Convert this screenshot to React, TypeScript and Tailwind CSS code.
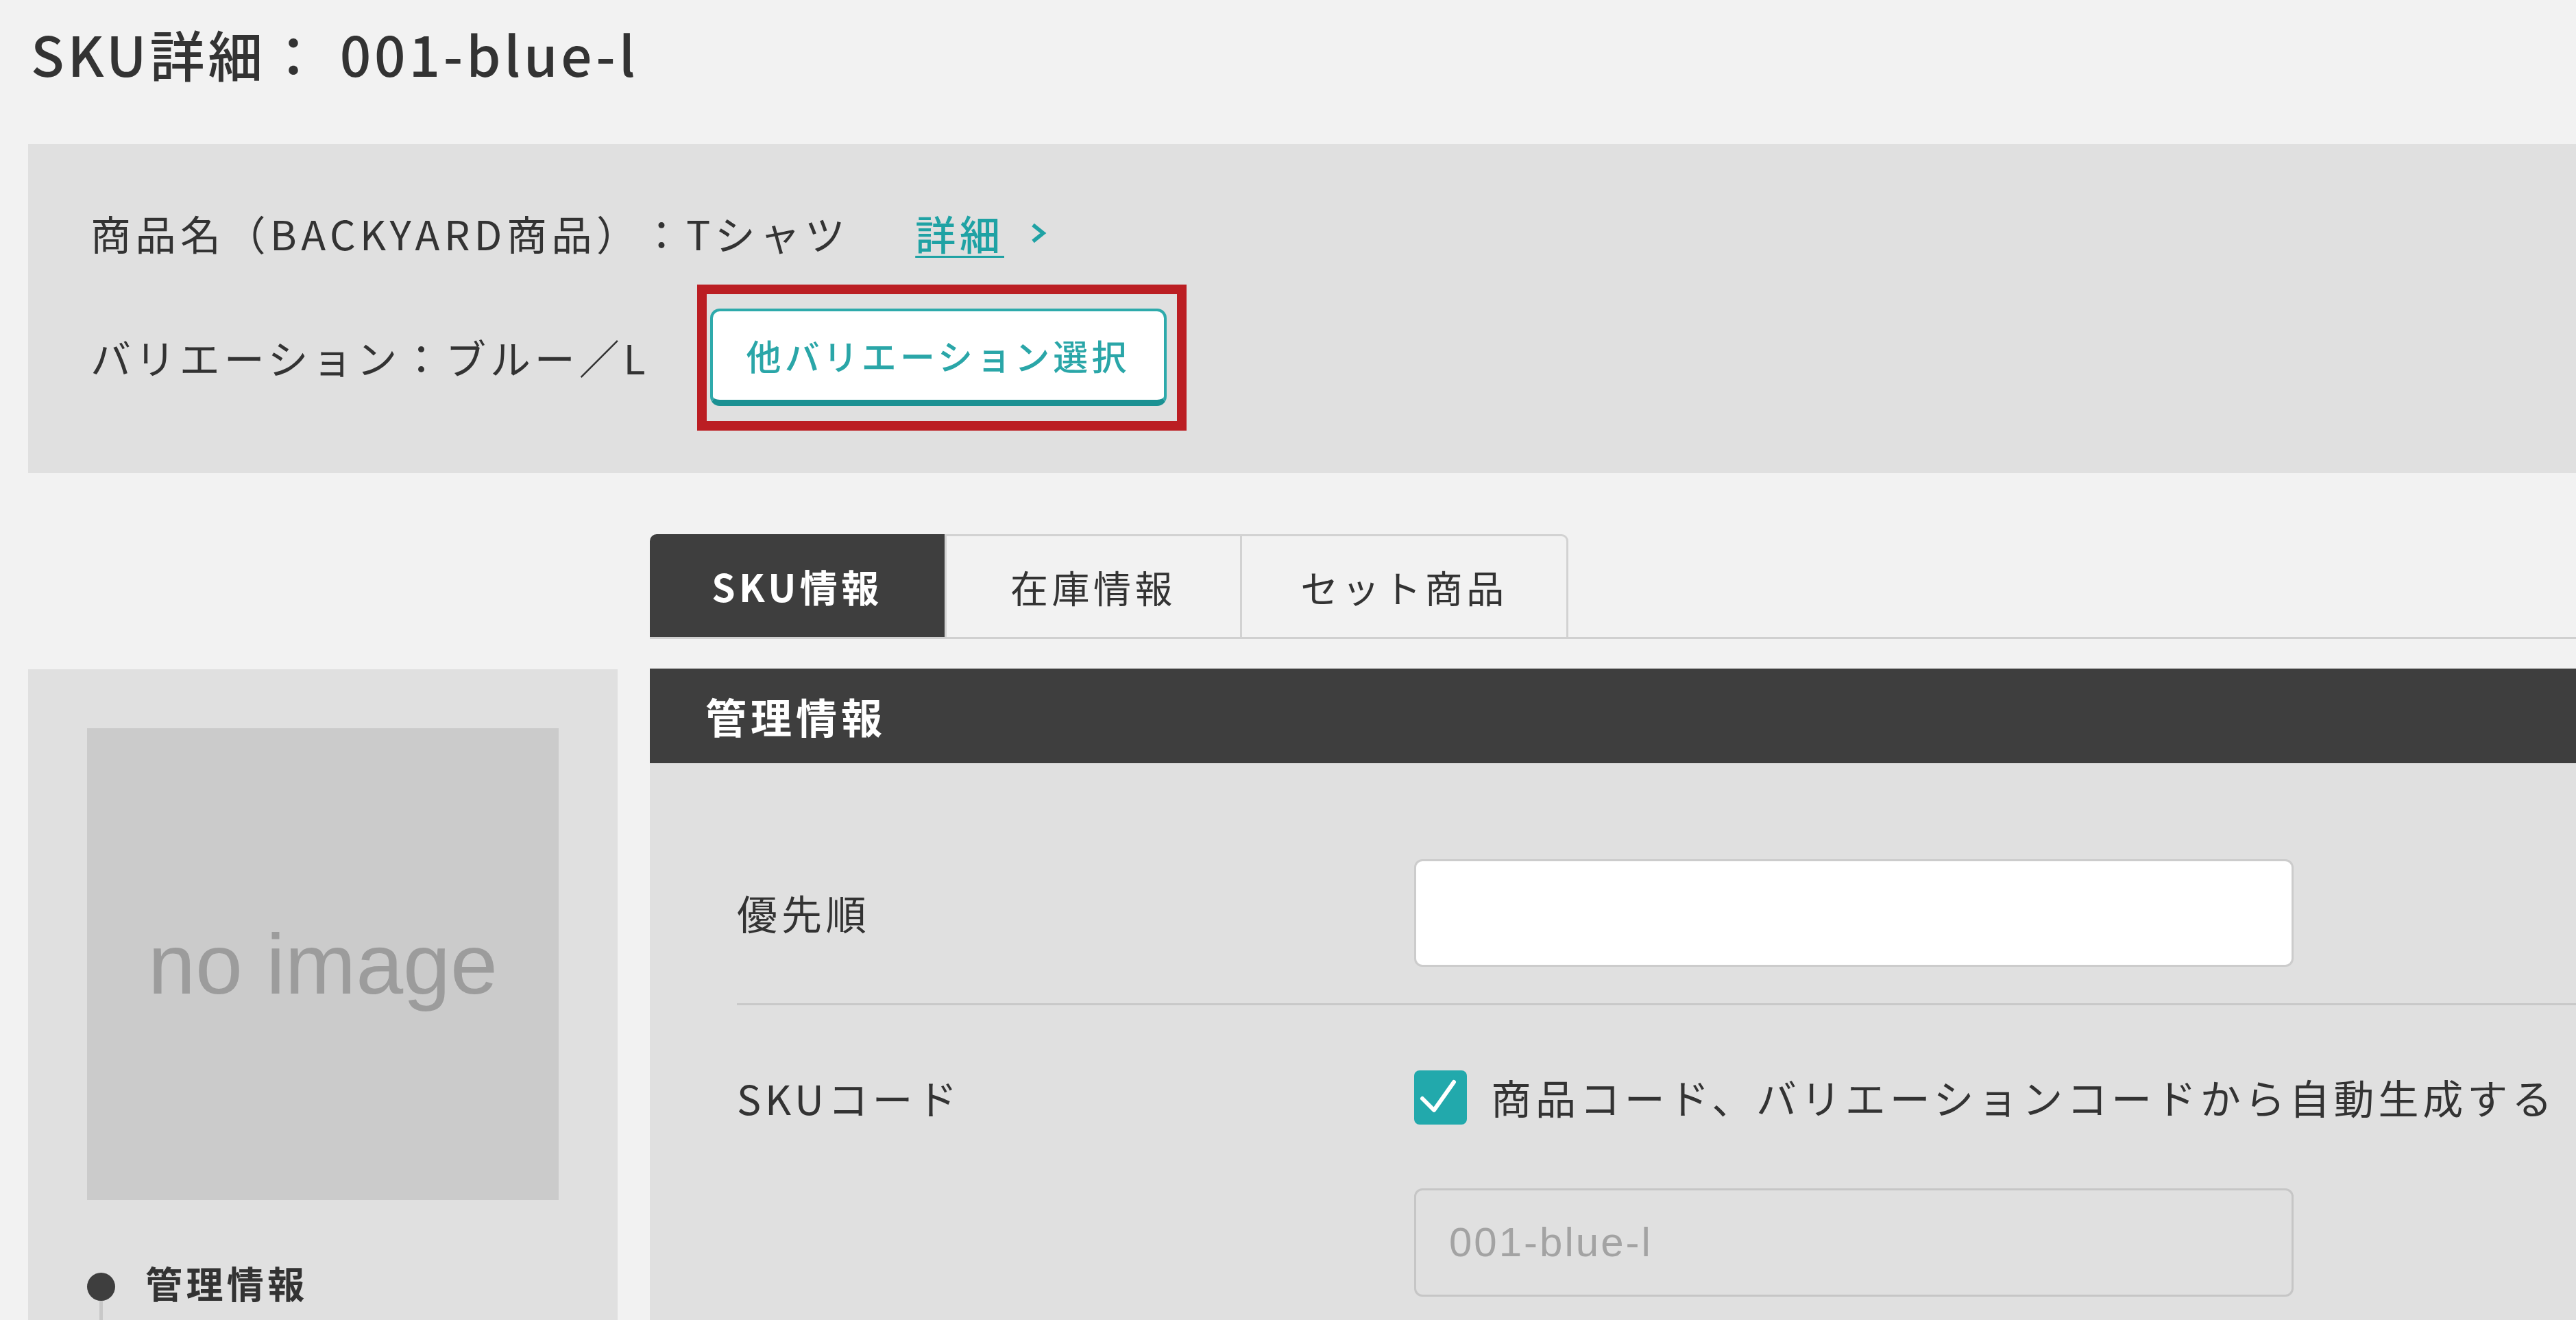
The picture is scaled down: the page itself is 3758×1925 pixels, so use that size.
const tabs = [
  { id: "sku", label: "SKU情報", width: "w-[430px]" },
  { id: "stock", label: "在庫情報", width: "w-[431px]" },
  { id: "set", label: "セット商品", width: "w-[479px]" },
];

function Chevron() {
  return (
    <svg width="24" height="32" viewBox="0 0 24 32" className="ml-[38px] shrink-0">
      <polyline points="4,4 19,16 4,28" fill="none" stroke="#1fa2a4" strokeWidth="5.5" />
    </svg>
  );
}

function CheckMark() {
  return (
    <svg width="77" height="79" viewBox="0 0 77 79">
      <polyline points="12,41 29,58 58,17" fill="none" stroke="white" strokeWidth="6" strokeLinecap="round" strokeLinejoin="round" />
    </svg>
  );
}

function ProductSummary() {
  return (
    <section className="ml-[41px] mt-[73px] h-[480px] bg-[#e0e0e0] pl-[91px] pt-[80px]">
      <div className="flex h-[100px] items-center text-[59px] tracking-[0.1em] text-[#333]">
        <span className="tracking-[0.11em]">商品名（BACKYARD商品）：Tシャツ</span>
        <a
          href="#"
          className="ml-[96px] font-medium text-[#1fa2a4] underline decoration-[3px] underline-offset-[8px]"
        >
          詳細
        </a>
        <Chevron />
      </div>
      <div className="mt-[60px] flex h-[142px] items-center text-[59px] tracking-[0.1em] text-[#333]">
        <span>バリエーション：ブルー／L</span>
        <div className="relative ml-[88px]">
          <button
            type="button"
            className="flex h-[142px] w-[666px] items-center justify-center rounded-[14px] border-[4px] border-b-[9px] border-[#2eaaab] border-b-[#1b9193] bg-white text-[51px] font-medium tracking-[0.1em] text-[#2aa6a8]"
          >
            他バリエーション選択
          </button>
          <span className="pointer-events-none absolute -bottom-[36px] -left-[19px] -right-[29px] -top-[35px] border-[14px] border-[#bb1e23]" />
        </div>
      </div>
    </section>
  );
}

function SideNav() {
  return (
    <aside className="ml-[41px] mt-[197px] w-[860px] shrink-0 self-stretch bg-[#e0e0e0] pl-[86px] pt-[86px]">
      <div className="flex h-[688px] w-[688px] items-center justify-center bg-[#cbcbcb]">
        <span className="font-['Liberation_Sans',Arial,sans-serif] text-[124px] text-[#9c9c9c]">no image</span>
      </div>
      <div className="mt-[106px] flex gap-[44px]">
        <div className="flex w-[41px] flex-col items-center">
          <span className="h-[41px] w-[41px] rounded-full bg-[#3e3e3e]" />
          <span className="h-[80px] w-[5px] bg-[#c8c8c8]" />
        </div>
        <span className="-mt-[6px] text-[54px] font-bold leading-[41px] tracking-[0.1em] text-[#333]">管理情報</span>
      </div>
    </aside>
  );
}

function TabBar() {
  return (
    <div className="flex h-[153px] border-b-[3px] border-[#d0d0d0]">
      {tabs.map((tab, i) => (
        <div
          key={tab.id}
          className={`flex items-center justify-center text-[55px] tracking-[0.1em] ${tab.width} ${
            i === 0
              ? "rounded-tl-[10px] bg-[#3e3e3e] font-bold text-white"
              : "border-l-[3px] border-t-[3px] border-[#d2d2d2] bg-[#f2f2f2] text-[#333]"
          } ${i === tabs.length - 1 ? "rounded-tr-[10px] border-r-[3px]" : ""}`}
        >
          {tab.label}
        </div>
      ))}
    </div>
  );
}

function ManagementForm() {
  return (
    <div className="bg-[#e0e0e0] pb-[160px] pl-[127px] pt-[140px]">
      <div className="flex items-center border-b-[3px] border-[#c9c9c9] pb-[53px]">
        <label className="w-[988px] text-[59px] tracking-[0.1em] text-[#333]">優先順</label>
        <input
          type="text"
          className="h-[157px] w-[1283px] rounded-[12px] border-[3px] border-[#cccccc] bg-white"
        />
      </div>
      <div className="flex items-start pt-[90px]">
        <label className="flex h-[90px] w-[988px] items-center text-[59px] tracking-[0.1em] text-[#333]">
          SKUコード
        </label>
        <div className="flex flex-col">
          <div className="flex items-center gap-[35px]">
            <span className="flex h-[79px] w-[77px] items-center justify-center rounded-[8px] bg-[#22a9ac]">
              <CheckMark />
            </span>
            <span className="text-[59px] tracking-[0.1em] text-[#333]">
              商品コード、バリエーションコードから自動生成する
            </span>
          </div>
          <div className="mt-[88px] flex h-[158px] w-[1283px] items-center rounded-[12px] border-[3px] border-[#c6c6c6] bg-[#e0e0e0] pl-[48px]">
            <span className="font-['Liberation_Sans',Arial,sans-serif] text-[60px] tracking-[3px] text-[#a3a3a3]">
              001-blue-l
            </span>
          </div>
        </div>
      </div>
    </div>
  );
}

export default function App() {
  return (
    <div className="min-h-screen overflow-hidden bg-[#f2f2f2] font-['Noto_Sans_CJK_JP',sans-serif] [text-spacing-trim:space-all]">
      <h1 className="pl-[45px] pt-[17px] text-[80px] font-medium leading-[120px] tracking-[0.06em] text-[#333]">
        SKU詳細： 001-blue-l
      </h1>
      <ProductSummary />
      <div className="mt-[89px] flex items-start">
        <SideNav />
        <main className="ml-[47px] min-w-0 flex-1">
          <TabBar />
          <div className="mt-[43px] flex h-[138px] items-center bg-[#3e3e3e] pl-[81px] text-[60px] font-bold tracking-[0.1em] text-white">
            管理情報
          </div>
          <ManagementForm />
        </main>
      </div>
    </div>
  );
}
